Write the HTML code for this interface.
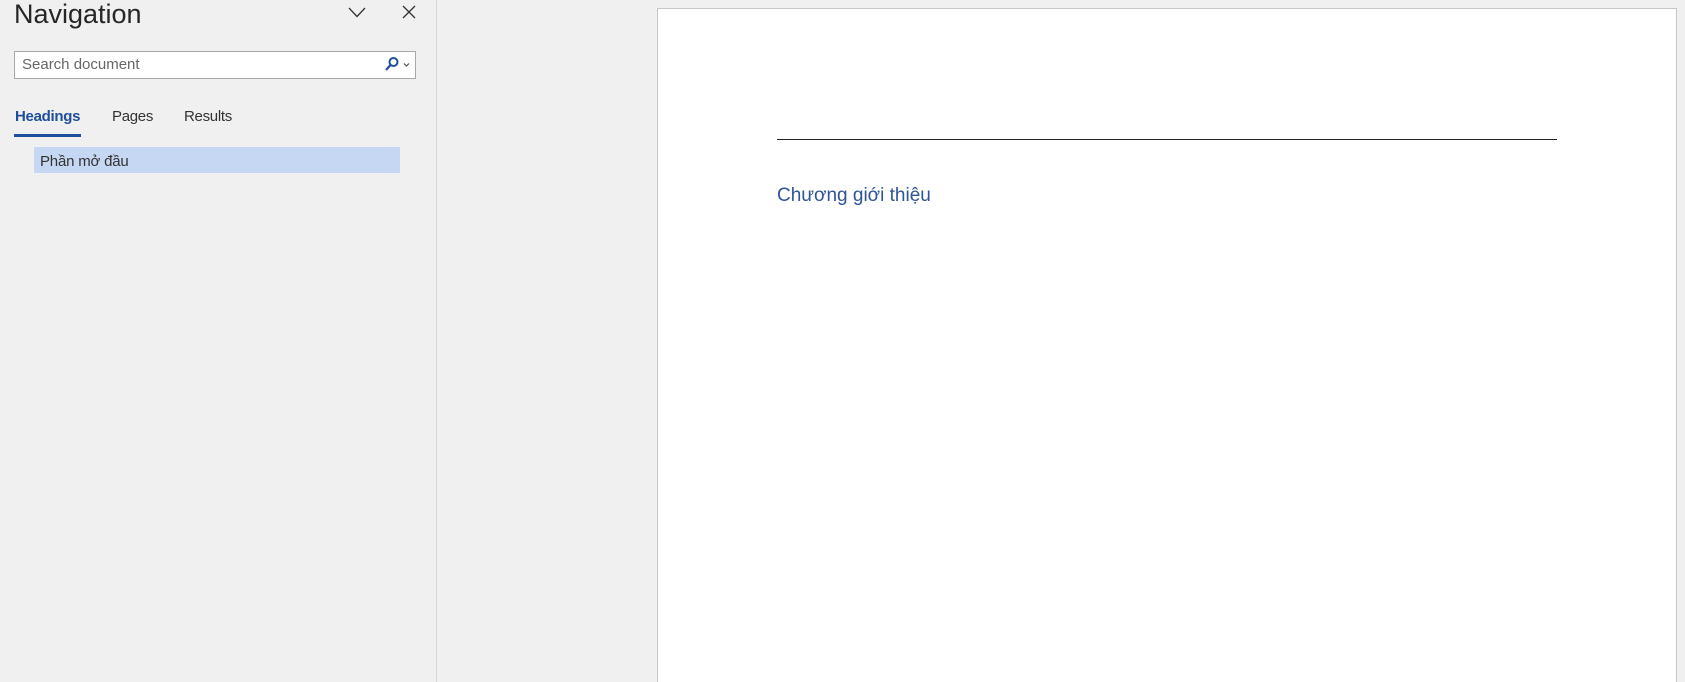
<!DOCTYPE html>
<html><head><meta charset="utf-8"><style>
*{margin:0;padding:0;box-sizing:border-box}
html,body{width:1685px;height:682px;overflow:hidden}
body{background:#f0f0f0;position:relative;font-family:"Liberation Sans",sans-serif}
.a{position:absolute;white-space:nowrap}
</style></head><body>
<div class="a" style="left:14px;top:-1px;font-size:27px;color:#262626;">Navigation</div>
<svg class="a" style="left:340px;top:0" width="100" height="30"><path d="M9 8 L17 16.5 L25 8" fill="none" stroke="#333" stroke-width="1.3"/><path d="M63 6 L75 18 M75 6 L63 18" stroke="#333" stroke-width="1.3"/></svg>
<div class="a" style="left:14px;top:51px;width:402px;height:28px;background:#fff;border:1px solid #a8a8a8;"></div>
<div class="a" style="left:22px;top:56px;font-size:15px;color:#666;">Search document</div>
<svg class="a" style="left:380px;top:54px" width="36" height="22"><circle cx="13.5" cy="8" r="4" fill="none" stroke="#1f4e9c" stroke-width="2"/><path d="M10.5 11 L6 16" stroke="#1f4e9c" stroke-width="2.2"/><path d="M24 9.5 L26.5 12 L29 9.5" fill="none" stroke="#444" stroke-width="1.1"/></svg>
<div class="a" style="left:15px;top:108px;font-size:15px;font-weight:bold;color:#1f4e9c;letter-spacing:-0.3px;">Headings</div>
<div class="a" style="left:14px;top:134px;width:67px;height:3px;background:#1f4e9c;"></div>
<div class="a" style="left:112px;top:108px;font-size:15px;color:#333;letter-spacing:-0.3px;">Pages</div>
<div class="a" style="left:184px;top:108px;font-size:15px;color:#333;letter-spacing:-0.3px;">Results</div>
<div class="a" style="left:34px;top:147px;width:366px;height:26px;background:#c5d7f2;"></div>
<div class="a" style="left:40px;top:153px;font-size:15px;color:#333;letter-spacing:-0.2px;">Phần mở đầu</div>
<div class="a" style="left:436px;top:0;width:1px;height:682px;background:#d6d6d6;"></div>
<div class="a" style="left:657px;top:8px;width:1020px;height:674px;background:#fff;border:1px solid #c6c6c6;border-bottom:none;"></div>
<div class="a" style="left:777px;top:139px;width:780px;height:1px;background:#222;"></div>
<div class="a" style="left:777px;top:185px;font-size:19px;color:#2f5496;">Chương giới thiệu</div>
</body></html>
